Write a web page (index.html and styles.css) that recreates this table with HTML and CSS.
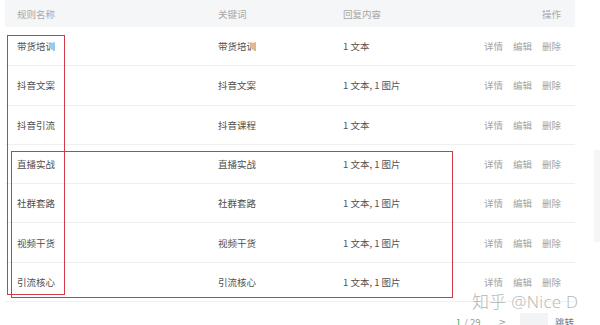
FILE: index.html
```html
<!DOCTYPE html>
<html lang="zh">
<head>
<meta charset="utf-8">
<link rel="stylesheet" href="styles.css">
</head>
<body>
<div class="page">
  <div class="table">
    <div class="row head">
      <div>规则名称</div><div>关键词</div><div>回复内容</div><div class="ops-h">操作</div>
    </div>
    <div class="row"><div>带货培训</div><div>带货培训</div><div>1 文本</div><div class="ops"><span>详情</span><span>编辑</span><span>删除</span></div></div>
    <div class="row"><div>抖音文案</div><div>抖音文案</div><div>1 文本, 1 图片</div><div class="ops"><span>详情</span><span>编辑</span><span>删除</span></div></div>
    <div class="row"><div>抖音引流</div><div>抖音课程</div><div>1 文本</div><div class="ops"><span>详情</span><span>编辑</span><span>删除</span></div></div>
    <div class="row"><div>直播实战</div><div>直播实战</div><div>1 文本, 1 图片</div><div class="ops"><span>详情</span><span>编辑</span><span>删除</span></div></div>
    <div class="row"><div>社群套路</div><div>社群套路</div><div>1 文本, 1 图片</div><div class="ops"><span>详情</span><span>编辑</span><span>删除</span></div></div>
    <div class="row"><div>视频干货</div><div>视频干货</div><div>1 文本, 1 图片</div><div class="ops"><span>详情</span><span>编辑</span><span>删除</span></div></div>
    <div class="row"><div>引流核心</div><div>引流核心</div><div>1 文本, 1 图片</div><div class="ops"><span>详情</span><span>编辑</span><span>删除</span></div></div>
  </div>
  <div class="pager">
    <span class="cur">1</span><span class="total">/ 29</span>
    <span class="next">&gt;</span>
    <span class="jump-input"></span>
    <span class="jump">跳转</span>
  </div>
  <div class="mark mark-a"></div>
  <div class="mark mark-b"></div>
  <div class="side"></div>
  <div class="watermark"><span class="wm-cn">知乎</span> @Nice D</div>
</div>
</body>
</html>
```

FILE: styles.css
```css
* { box-sizing: border-box; }
html, body { margin: 0; padding: 0; background: #fff; }
body {
  font-family: "Noto Sans CJK SC", "Noto Sans", sans-serif;
  font-size: 9.5px;
  color: #505050;
  width: 600px;
  height: 325px;
  overflow: hidden;
}
.page { position: relative; width: 600px; height: 325px; }
.table { width: 570px; margin-left: 5px; }
.row {
  display: grid;
  grid-template-columns: 201px 125px 1fr auto;
  align-items: center;
  height: 39.3px;
  padding: 0 14px 0 12px;
  border-bottom: 1px solid #eeeff0;
}
.row.head {
  height: 27px;
  background: #f5f6f7;
  color: #a8a8a8;
  border-bottom: none;
}
.ops { display: flex; gap: 10px; color: #a3a3a3; }
.ops-h { text-align: right; }
.pager {
  display: flex;
  align-items: center;
  justify-content: flex-end;
  height: 20px;
  margin-top: 10px;
  padding-right: 26px;
  color: #9a9a9a;
  font-size: 9.5px;
}
.cur { color: #2fae64; margin-right: 3px; }
.total { margin-right: 18px; }
.next { margin-right: 14px; font-family: "DejaVu Sans", sans-serif; font-size: 9px; }
.jump-input { width: 28px; height: 18px; background: #f2f3f4; margin-right: 7px; }
.jump { color: #777; }
.mark {
  position: absolute;
  border: 1.7px solid #d23a45;
}
.mark-a { left: 7px; top: 35px; width: 58px; height: 260px; }
.mark-b { left: 11px; top: 151px; width: 442px; height: 147px; }
.side {
  position: absolute;
  left: 594px; top: 150px; width: 6px; height: 92px;
  background: #f6f6f6;
}
.watermark {
  position: absolute;
  left: 472px; top: 288px;
  font-family: "Open Sans", "Noto Sans CJK SC", sans-serif;
  font-weight: 300;
  font-size: 17px;
  color: #b5b5b5;
  letter-spacing: 0.3px;
  text-shadow: 0 0 2px #fff, 0 0 2px #fff;
  white-space: nowrap;
}
.wm-cn { font-family: "Noto Sans CJK SC", sans-serif; font-weight: 300; }
```
